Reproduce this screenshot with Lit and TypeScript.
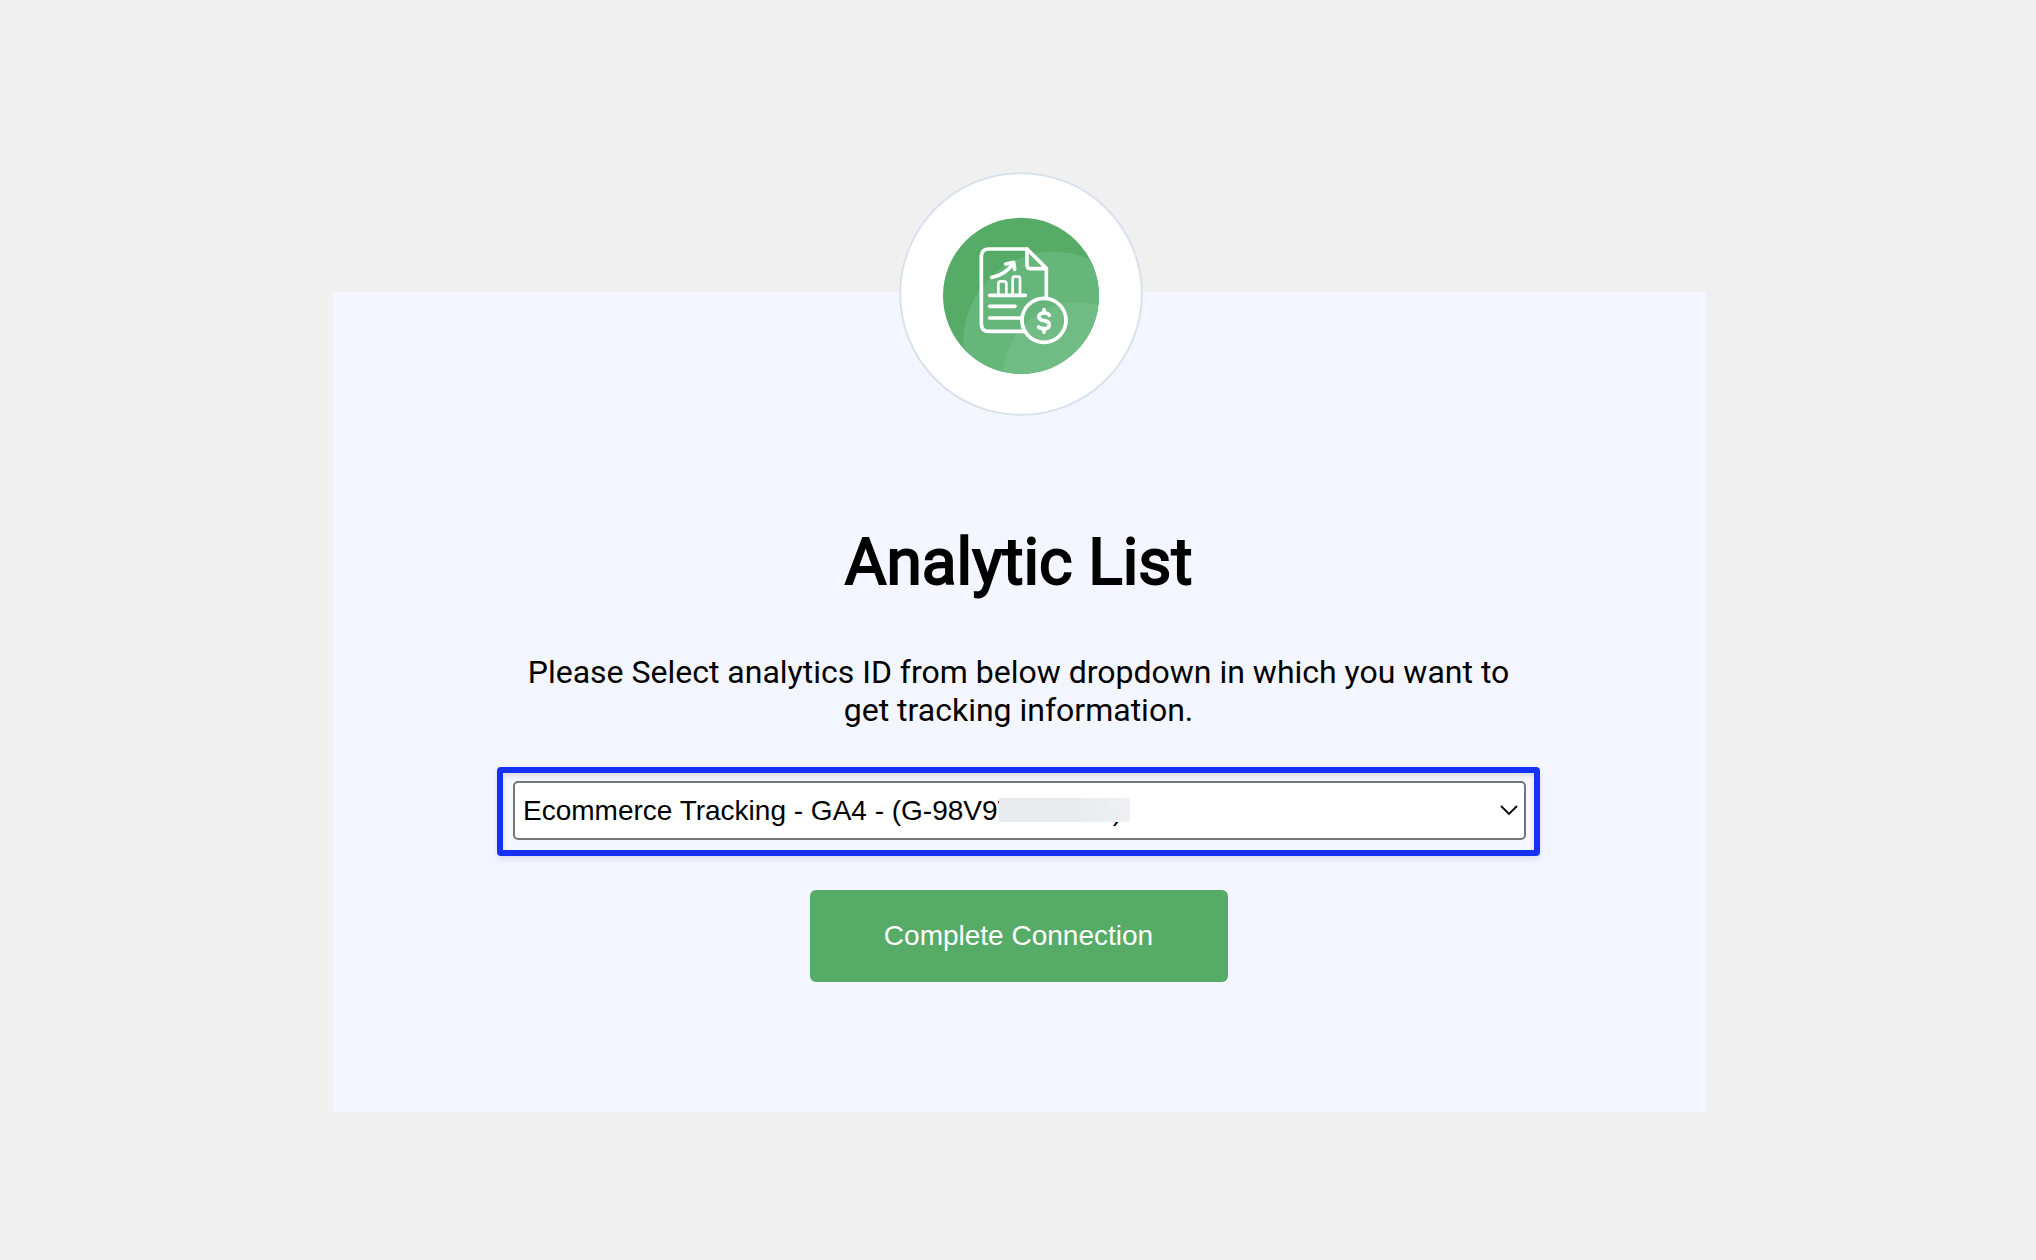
import { LitElement, html, css } from "lit";
import { customElement } from "lit/decorators.js";

const PROPERTY_LABEL =
  "Ecommerce Tracking - GA4 - (G-98V9T" + "\u2002".repeat(7) + ")";

@customElement("report-badge")
class ReportBadge extends LitElement {
  static styles = css`
    :host {
      display: block;
    }
    .badge {
      display: block;
      width: 100%;
      height: 100%;
    }
  `;

  render() {
    return html`
      <svg class="badge" viewBox="27 36 732 732" fill="none" aria-hidden="true">
        <defs>
          <clipPath id="disc"><circle cx="393" cy="407.5" r="234" /></clipPath>
        </defs>
        <circle cx="393" cy="402" r="362.5" fill="#fff" stroke="#d8e1ec" stroke-width="6" />
        <g clip-path="url(#disc)">
          <rect x="150" y="165" width="486" height="486" fill="#56ab67" />
          <circle cx="490" cy="545" r="270" fill="#66b67b" />
          <circle cx="560" cy="647" r="220" fill="#70bc84" />
        </g>
        <g stroke="#fff" stroke-width="11" stroke-linecap="round" stroke-linejoin="round">
          <path stroke-linecap="butt" d="M404 514H297q-23 0-23-23V290q0-23 23-23H411L469 325V413" />
          <path d="M411 267V315q0 11 11 11h47" />
          <path d="M305 352Q345 346 371 309M347 312L371 307L374 328" />
          <path stroke-width="8" d="M325 404V371q0-7 7-7h10q7 0 7 7V404M368 404V356q0-6 6-6h10q6 0 6 6V404" />
          <path d="M299 406H406M299 439H375M299 474H394" />
          <circle cx="462" cy="481" r="66" />
          <path
            d="M478 466Q475 459 462 459Q447 459 447 470Q447 479 462 482Q478 485 478 494Q478 506 462 506Q450 506 446 501M462 449V458M462 507V517"
          />
        </g>
      </svg>
    `;
  }
}

@customElement("app-root")
class AppRoot extends LitElement {
  static styles = css`
    :host {
      display: block;
      font-family: Roboto, "Liberation Sans", sans-serif;
      color: #000;
    }
    * {
      box-sizing: border-box;
    }
    .page {
      min-height: 100vh;
      padding: 292px 0 148px 3px;
      background: #f0f0f0;
    }
    .card {
      position: relative;
      display: flex;
      flex-direction: column;
      align-items: center;
      max-width: 1373px;
      margin: 0 auto;
      padding: 233px 166px 130px 164px;
      background: #f3f6fe;
    }
    .emblem {
      position: absolute;
      top: -120px;
      left: calc(50% - 121px);
      width: 244px;
      height: 244px;
    }
    .title {
      margin: 0 0 52px;
      font-size: 64px;
      line-height: 76px;
      font-weight: 400;
      -webkit-text-stroke: 2px #000;
    }
    .intro {
      max-width: 1000px;
      margin: 0 0 38px;
      font-size: 32px;
      line-height: 38px;
      font-weight: 400;
      text-align: center;
    }
    .intro-label {
      display: block;
    }
    .highlight {
      align-self: stretch;
      margin-bottom: 34px;
      padding: 8px 8px 10px 10px;
      border: 6px solid #1531f5;
      border-radius: 4px;
      box-shadow:
        0 3px 6px rgba(0, 0, 0, 0.1),
        inset 0 3px 5px rgba(0, 0, 0, 0.1);
    }
    .field {
      position: relative;
    }
    .select {
      display: block;
      appearance: none;
      width: 100%;
      height: 59px;
      margin: 0;
      padding: 0 44px 0 8px;
      border: 2px solid #767676;
      border-radius: 5px;
      background: #fff;
      color: #000;
      font: 28px "Liberation Sans", Arial, sans-serif;
    }
    .mask {
      position: absolute;
      top: 17px;
      left: 486px;
      width: 131px;
      height: 24px;
      background: linear-gradient(100deg, #e8eaed, #e9eaee 50%, #eff0f4);
      pointer-events: none;
    }
    .chevron {
      position: absolute;
      top: 23px;
      right: 7px;
      width: 20px;
      height: 12px;
      pointer-events: none;
    }
    .submit {
      width: 418px;
      max-width: 100%;
      height: 92px;
      padding: 0;
      border: 0;
      border-radius: 6px;
      background: #56ab67;
      color: #fff;
      font: 28px "Liberation Sans", Arial, sans-serif;
      cursor: pointer;
    }
  `;

  render() {
    return html`
      <main class="page">
        <section class="card">
          <report-badge class="emblem"></report-badge>
          <h1 class="title">Analytic List</h1>
          <p class="intro">
            <label class="intro-label" for="property">
              Please Select analytics ID from below dropdown in which you want to
              get tracking information.
            </label>
          </p>
          <div class="highlight">
            <div class="field">
              <select class="select" id="property">
                <option>${PROPERTY_LABEL}</option>
              </select>
              <span class="mask"></span>
              <svg class="chevron" viewBox="0 0 20 12" fill="none" aria-hidden="true">
                <path d="M2 2l8 8 8-8" stroke="#000" stroke-width="1.8" />
              </svg>
            </div>
          </div>
          <button class="submit" type="button">Complete Connection</button>
        </section>
      </main>
    `;
  }
}
